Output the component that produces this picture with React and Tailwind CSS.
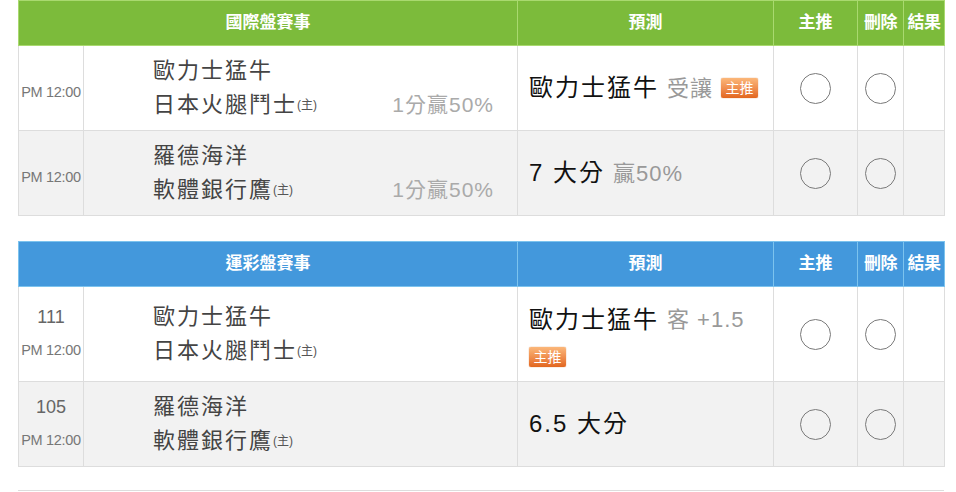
const FONT = { fontFamily: '"Liberation Sans", "Noto Sans CJK TC", sans-serif' };

const Badge = () => (
  <span className="inline-flex items-center justify-center w-[37px] h-[20px] rounded-[2px] bg-gradient-to-b from-[#fbb779] to-[#e2661c] text-white text-[14px] leading-none shadow-[0_0_1px_#c85a10]">
    主推
  </span>
);

const Circle = () => (
  <div className="mx-auto w-[31px] h-[31px] rounded-full border-[1.5px] border-[#7a7a7a]" />
);

const sections = [
  {
    title: '國際盤賽事',
    head: 'bg-[#7cbb3b]',
    line: 'border-[#a9d96f]',
    rows: [
      {
        code: '',
        home: '歐力士猛牛',
        away: '日本火腿鬥士',
        odds: '1分贏50%',
        pick: '歐力士猛牛',
        note: '受讓',
        badge: 'inline',
      },
      {
        code: '',
        home: '羅德海洋',
        away: '軟體銀行鷹',
        odds: '1分贏50%',
        pick: '7 大分',
        note: '贏50%',
      },
    ],
  },
  {
    title: '運彩盤賽事',
    head: 'bg-[#4398dc]',
    line: 'border-[#7cc3ee]',
    rows: [
      {
        code: '111',
        home: '歐力士猛牛',
        away: '日本火腿鬥士',
        pick: '歐力士猛牛',
        note: '客 +1.5',
        badge: 'below',
        tall: true,
      },
      {
        code: '105',
        home: '羅德海洋',
        away: '軟體銀行鷹',
        pick: '6.5 大分',
      },
    ],
  },
];

const Section = ({ section }) => (
  <table className="w-[926px] table-fixed border-collapse">
    <colgroup>
      <col className="w-[65px]" />
      <col className="w-[434px]" />
      <col className="w-[256px]" />
      <col className="w-[84px]" />
      <col className="w-[46px]" />
      <col className="w-[41px]" />
    </colgroup>
    <thead>
      <tr className={`${section.head} text-white text-[17px] font-bold h-[45px]`}>
        <th colSpan={2} className={`border ${section.line} font-bold`}>{section.title}</th>
        <th className={`border ${section.line} font-bold`}>預測</th>
        <th className={`border ${section.line} font-bold`}>主推</th>
        <th className={`border ${section.line} font-bold tracking-tight`}>刪除</th>
        <th className={`border ${section.line} font-bold tracking-tight`}>結果</th>
      </tr>
    </thead>
    <tbody>
      {section.rows.map((row, i) => (
        <tr key={i} className={`${i % 2 ? 'bg-[#f2f2f2]' : 'bg-white'} ${row.tall ? 'h-[95px]' : 'h-[85px]'}`}>
          <td className="border border-[#dddddd] text-center align-middle whitespace-nowrap">
            {row.code ? (
              <div className="flex flex-col items-center">
                <span className="text-[18px] leading-[33px] text-[#666]">{row.code}</span>
                <span className="text-[14.5px] leading-[33px] text-[#777] tracking-[-0.3px]">PM 12:00</span>
              </div>
            ) : (
              <span className="block pt-[10px] text-[14.5px] text-[#777] tracking-[-0.3px]">PM 12:00</span>
            )}
          </td>
          <td className="border border-[#dddddd] align-middle">
            <div className="pl-[69px] pr-[23px] text-[22px] text-[#444]">
              <div className="leading-[34px] tracking-[2px]">{row.home}</div>
              <div className="flex items-center leading-[34px]">
                <span className="tracking-[2px]">{row.away}</span>
                <span className="text-[12px] text-[#555]">(主)</span>
                {row.odds && <span className="ml-auto text-[21px] text-[#aaa] tracking-[1px]">{row.odds}</span>}
              </div>
            </div>
          </td>
          <td className="border border-[#dddddd] align-middle pl-[11px]">
            <div className="flex items-center gap-[8px]">
              <span className="text-[24px] text-[#111] tracking-[2px]">{row.pick}</span>
              {row.note && <span className="text-[22px] text-[#999] tracking-[1px]">{row.note}</span>}
              {row.badge === 'inline' && <Badge />}
            </div>
            {row.badge === 'below' && (
              <div className="mt-[9px] flex">
                <Badge />
              </div>
            )}
          </td>
          <td className="border border-[#dddddd] align-middle"><Circle /></td>
          <td className="border border-[#dddddd] align-middle"><Circle /></td>
          <td className="border border-[#dddddd]"></td>
        </tr>
      ))}
    </tbody>
  </table>
);

export default function App() {
  return (
    <div className="w-[956px] h-[492px] bg-white overflow-hidden" style={FONT}>
      <div className="pl-[18px] flex flex-col gap-[25px]">
        {sections.map((s) => (
          <Section key={s.title} section={s} />
        ))}
        <div className="-mt-[2px] w-[926px] border-t border-[#dddddd]" />
      </div>
    </div>
  );
}
